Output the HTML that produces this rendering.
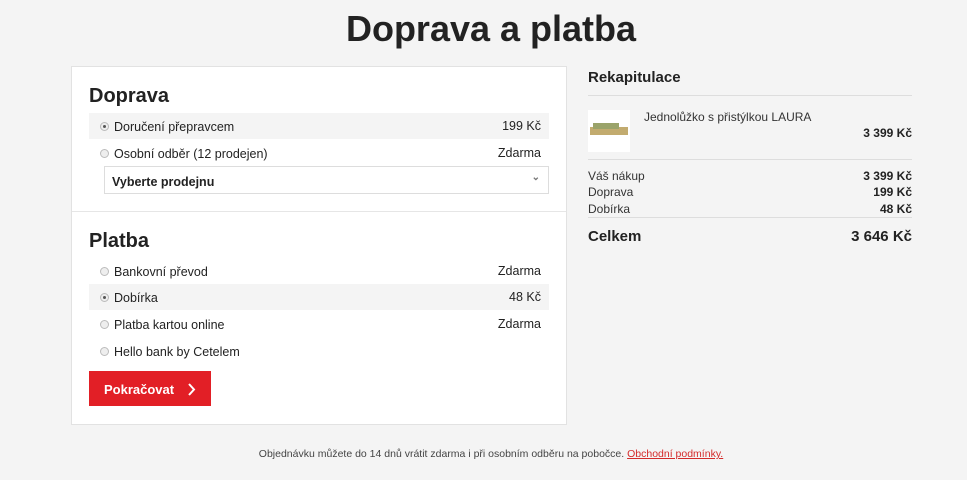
<!DOCTYPE html><html><head><meta charset="utf-8"><style>
body{margin:0;width:967px;height:480px;background:#f4f4f4;font-family:"Liberation Sans",sans-serif;color:#222;position:relative;overflow:hidden}
.a{position:absolute;white-space:nowrap}
.r{position:absolute;left:89px;width:460px;height:26px;font-size:12.5px}
.r.h{background:#f4f4f4}
.r .t{position:absolute;left:25px;top:7px}
.r .p{position:absolute;right:8px;top:6px}
.rad{position:absolute;left:11px;top:9px;width:7px;height:7px;border-radius:50%;border:1px solid #bbb;background:#eee}
.rad.on::after{content:"";position:absolute;left:2px;top:2px;width:3px;height:3px;border-radius:50%;background:#555}
.rt{position:absolute;right:55px;font-size:12px;font-weight:bold}
.lt{position:absolute;left:588px;font-size:12px;color:#333}
</style></head><body>
<div class="a" style="left:0;width:982px;text-align:center;top:8px;font-size:36px;font-weight:bold;color:#222">Doprava a platba</div>
<div class="a" style="left:71px;top:66px;width:494px;height:357px;background:#fff;border:1px solid #e2e2e2"></div>
<div class="a" style="left:72px;top:211px;width:494px;height:1px;background:#e6e6e6"></div>
<div class="a" style="left:89px;top:85px;font-size:20px;font-weight:bold">Doprava</div>
<div class="r h" style="top:113px"><span class="rad on"></span><span class="t">Doručení přepravcem</span><span class="p">199 Kč</span></div>
<div class="r" style="top:140px"><span class="rad"></span><span class="t">Osobní odběr (12 prodejen)</span><span class="p" style="top:6px">Zdarma</span></div>
<div class="a" style="left:104px;top:166px;width:443px;height:26px;border:1px solid #ddd;background:#fff;font-size:12.5px;font-weight:bold"><span style="position:absolute;left:7px;top:8px">Vyberte prodejnu</span><span style="position:absolute;right:8px;top:5px;font-size:10px;color:#777">⌄</span></div>
<div class="a" style="left:89px;top:230px;font-size:20px;font-weight:bold">Platba</div>
<div class="r" style="top:258px"><span class="rad"></span><span class="t">Bankovní převod</span><span class="p" style="top:6px">Zdarma</span></div>
<div class="r h" style="top:284px"><span class="rad on"></span><span class="t">Dobírka</span><span class="p">48 Kč</span></div>
<div class="r" style="top:311px"><span class="rad"></span><span class="t">Platba kartou online</span><span class="p" style="top:6px">Zdarma</span></div>
<div class="r" style="top:338px"><span class="rad"></span><span class="t">Hello bank by Cetelem</span></div>
<div class="a" style="left:89px;top:371px;width:122px;height:35px;background:#e21f26;color:#fff;font-size:13px;font-weight:bold"><span style="position:absolute;left:15px;top:11px">Pokračovat</span><svg style="position:absolute;left:98px;top:12px" width="9" height="13"><path d="M2 1l5 5.5L2 12" stroke="#fff" stroke-width="2" fill="none"/></svg></div>
<div class="a" style="left:588px;top:69px;font-size:15px;font-weight:bold">Rekapitulace</div>
<div class="a" style="left:588px;top:95px;width:324px;height:1px;background:#ddd"></div>
<div class="a" style="left:588px;top:110px;width:42px;height:42px;background:#fff"><div style="position:absolute;left:2px;top:17px;width:38px;height:8px;background:#c2ab6f"></div><div style="position:absolute;left:5px;top:13px;width:26px;height:6px;background:#9aa36a"></div></div>
<div class="a" style="left:644px;top:110px;font-size:12px;color:#333">Jednolůžko s přistýlkou LAURA</div>
<div class="rt" style="top:126px">3 399 Kč</div>
<div class="a" style="left:588px;top:159px;width:324px;height:1px;background:#ddd"></div>
<div class="lt" style="top:169px">Váš nákup</div><div class="rt" style="top:169px">3 399 Kč</div>
<div class="lt" style="top:185px">Doprava</div><div class="rt" style="top:185px">199 Kč</div>
<div class="lt" style="top:202px">Dobírka</div><div class="rt" style="top:202px">48 Kč</div>
<div class="a" style="left:588px;top:217px;width:324px;height:1px;background:#ddd"></div>
<div class="a" style="left:588px;top:228px;font-size:15px;font-weight:bold">Celkem</div>
<div class="a" style="right:55px;top:228px;font-size:15px;font-weight:bold">3 646 Kč</div>
<div class="a" style="left:0;width:982px;text-align:center;top:448px;font-size:10.5px;color:#444">Objednávku můžete do 14 dnů vrátit zdarma i při osobním odběru na pobočce. <span style="color:#d42a2a;text-decoration:underline">Obchodní podmínky.</span></div>
</body></html>
